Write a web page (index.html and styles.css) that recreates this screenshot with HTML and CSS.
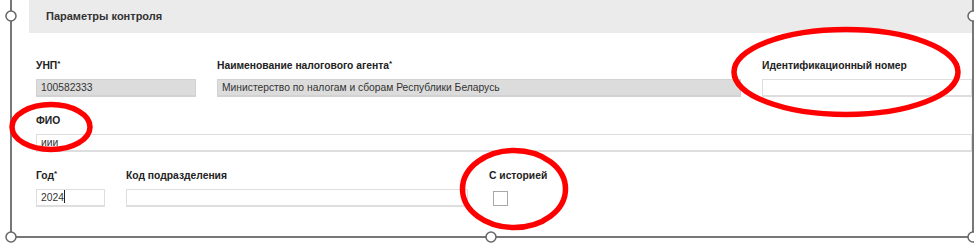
FILE: index.html
```html
<html>
  <head>
    <meta charset="utf-8" />
    <title>Параметры контроля</title>
    <link rel="stylesheet" href="styles.css">
  </head>
  <body>
    <div class="frame">
      <div class="panel">
        <div class="panel-title">Параметры контроля</div>
        <div class="form">
          <div class="row">
            <div class="field unp">
              <div class="label">УНП<sup>*</sup></div>
              <div class="input readonly">100582333</div>
            </div>
            <div class="field agent">
              <div class="label">Наименование налогового агента<sup>*</sup></div>
              <div class="input readonly">Министерство по налогам и сборам Республики Беларусь</div>
            </div>
            <div class="field grow">
              <div class="label">Идентификационный номер</div>
              <div class="input"></div>
            </div>
          </div>
          <div class="row">
            <div class="field grow">
              <div class="label">ФИО</div>
              <div class="input">иии</div>
            </div>
          </div>
          <div class="row">
            <div class="field year">
              <div class="label">Год<sup>*</sup></div>
              <div class="input">2024<span class="caret"></span></div>
            </div>
            <div class="field unit">
              <div class="label">Код подразделения</div>
              <div class="input"></div>
            </div>
            <div class="field">
              <div class="label">С историей</div>
              <div class="checkbox"></div>
            </div>
          </div>
        </div>
      </div>
    </div>

    <svg class="marks" width="974" height="249" viewBox="0 0 974 249">
      <g fill="none" stroke="#f00" stroke-width="5.5">
        <ellipse cx="846" cy="72" rx="112" ry="42.5" />
        <ellipse cx="51" cy="127" rx="39" ry="22.5" />
        <ellipse cx="514" cy="189" rx="51.5" ry="38.5" />
      </g>
      <g fill="#fff" stroke="#666" stroke-width="1.5">
        <circle cx="11" cy="16" r="5" />
        <circle cx="11" cy="237" r="5" />
        <circle cx="491" cy="237" r="5" />
        <circle cx="973" cy="16" r="5" />
        <circle cx="973" cy="237" r="5" />
      </g>
    </svg>
  </body>
</html>
```

FILE: styles.css
```css
html, body {
  margin: 0;
  height: 100%;
}

body {
  position: relative;
  width: 974px;
  height: 249px;
  overflow: hidden;
  background-color: #ffffff;
  font-family: "Liberation Sans", Arial, sans-serif;
  color: #333333;
}

.frame {
  box-sizing: border-box;
  margin-left: 10px;
  width: 964px;
  height: 238px;
  border: 2px solid #777777;
  border-top: none;
}

.panel {
  padding-left: 17px;
}

.panel-title {
  height: 33px;
  line-height: 33px;
  padding-left: 17px;
  background-color: #ebebeb;
  font-size: 11px;
  font-weight: bold;
  color: #333333;
}

.form {
  padding: 26px 0 0 7px;
  display: flex;
  flex-direction: column;
  gap: 17px;
}

.row {
  display: flex;
  gap: 21px;
}

.field {
  display: flex;
  flex-direction: column;
}
.field.unp { width: 160px; }
.field.agent { width: 524px; }
.field.year { width: 69px; }
.field.unit { width: 342px; }
.field.grow { flex: 1 1 0; }

.label {
  height: 14px;
  line-height: 14px;
  margin-bottom: 6px;
  font-size: 10.3px;
  font-weight: bold;
  color: #222222;
}
.label sup {
  font-size: 8px;
  line-height: 0;
  vertical-align: 3px;
}

.input {
  box-sizing: border-box;
  height: 18px;
  line-height: 16px;
  padding-left: 4px;
  border: 1px solid #dedede;
  border-bottom-width: 2px;
  background-color: #ffffff;
  font-size: 10.3px;
  color: #333333;
  white-space: nowrap;
  overflow: hidden;
}
.input.readonly {
  background-color: #dcdcdc;
  border-color: #d2d2d2;
}

.caret {
  display: inline-block;
  width: 1px;
  height: 13px;
  vertical-align: -2px;
  background-color: #222222;
}

.checkbox {
  box-sizing: border-box;
  width: 15px;
  height: 15px;
  margin: 2px 0 0 4px;
  border: 1px solid #a8a8a8;
  background-color: #ffffff;
}

.marks {
  position: absolute;
  left: 0;
  top: 0;
}
```
